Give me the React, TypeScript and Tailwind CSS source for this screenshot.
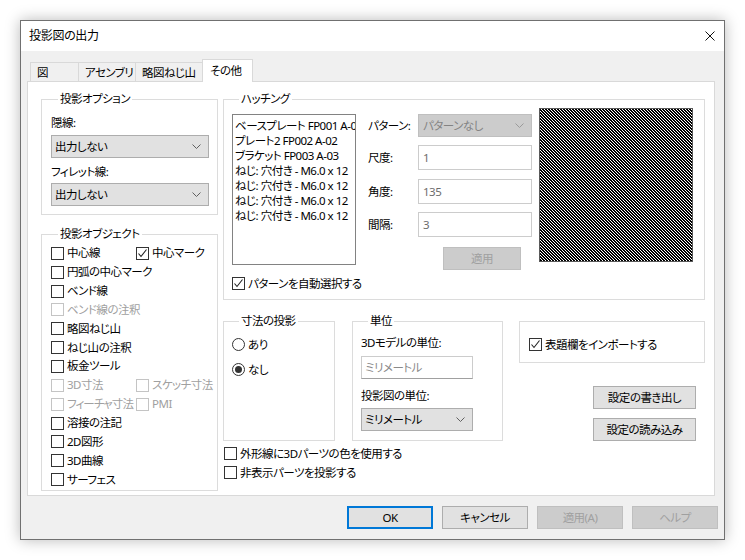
import React from "react";

type CheckProps = {
  label: string;
  checked?: boolean;
  disabled?: boolean;
  className?: string;
};

function Chevron({ color = "#606060" }: { color?: string }) {
  return (
    <svg width="9" height="5" viewBox="0 0 9 5" className="shrink-0">
      <polyline
        points="0.5,0.5 4.5,4.5 8.5,0.5"
        fill="none"
        stroke={color}
        strokeWidth="1"
      />
    </svg>
  );
}

function CheckBox({ label, checked, disabled, className = "" }: CheckProps) {
  return (
    <div
      className={`flex h-[18.85px] items-center gap-[3px] whitespace-nowrap ${
        disabled ? "text-[#a0a0a0]" : "text-black"
      } ${className}`}
    >
      <span
        className={`flex h-[13px] w-[13px] shrink-0 items-center justify-center border bg-white ${
          disabled ? "border-[#c4c4c4]" : "border-[#333333]"
        }`}
      >
        {checked && (
          <svg width="11" height="11" viewBox="0 0 11 11">
            <polyline
              points="1.5,5.5 4,8.5 9.5,1.5"
              fill="none"
              stroke="#222"
              strokeWidth="1.1"
            />
          </svg>
        )}
      </span>
      <span className="leading-[16px]">{label}</span>
    </div>
  );
}

function Radio({ label, checked }: { label: string; checked?: boolean }) {
  return (
    <div className="flex h-[19px] items-center gap-[3px]">
      <span className="flex h-[13px] w-[13px] items-center justify-center rounded-full border border-[#333333] bg-white">
        {checked && <span className="h-[7px] w-[7px] rounded-full bg-[#333333]" />}
      </span>
      <span className="leading-[16px]">{label}</span>
    </div>
  );
}

function Combo({ value, className = "" }: { value: string; className?: string }) {
  return (
    <div
      className={`flex h-[23px] items-center justify-between border border-[#adadad] bg-[#e1e1e1] pl-[3px] pr-[7px] ${className}`}
    >
      <span className="leading-[16px]">{value}</span>
      <Chevron />
    </div>
  );
}

function Legend({ children }: { children: React.ReactNode }) {
  return <legend className="ml-[7px] px-[2px] leading-[16px]">{children}</legend>;
}

function Button({
  label,
  disabled,
  primary,
  className = "",
}: {
  label: string;
  disabled?: boolean;
  primary?: boolean;
  className?: string;
}) {
  return (
    <div
      className={`flex h-[23px] items-center justify-center whitespace-nowrap ${
        primary
          ? "border-2 border-[#0078d7] bg-[#e1e1e1]"
          : disabled
          ? "border border-[#bfbfbf] bg-[#cccccc] text-[#a0a0a0]"
          : "border border-[#adadad] bg-[#e1e1e1]"
      } ${className}`}
    >
      {label}
    </div>
  );
}

function Hatch() {
  const lines = [];
  for (let k = -152; k <= 152; k += 3) {
    lines.push(
      <line key={k} x1={k} y1={0} x2={k + 152} y2={152} stroke="#fff" strokeWidth="1" />
    );
  }
  return (
    <div className="ml-[7px] mt-[1px] h-[154px] w-[154px] shrink-0 border border-[#5a5a5a] bg-black">
      <svg width="152" height="152" viewBox="0 0 152 152" shapeRendering="crispEdges">
        <rect width="152" height="152" fill="#000" />
        {lines}
      </svg>
    </div>
  );
}

const parts = [
  "ベースプレート FP001 A-01",
  "プレート2 FP002 A-02",
  "ブラケット FP003 A-03",
  "ねじ: 穴付き - M6.0 x 12",
  "ねじ: 穴付き - M6.0 x 12",
  "ねじ: 穴付き - M6.0 x 12",
  "ねじ: 穴付き - M6.0 x 12",
];

export default function App() {
  return (
    <div className="h-[560px] w-[745px] overflow-hidden bg-white pl-[20px] pt-[20px] font-['Noto_Sans','Noto_Sans_CJK_JP',sans-serif] text-[11.5px] tracking-[-0.5px] text-black [font-feature-settings:'palt']">
      <div className="flex h-[520px] w-[705px] flex-col border border-[#707070] bg-[#f0f0f0] shadow-[0_0_14px_rgba(0,0,0,0.28)]">
        {/* title bar */}
        <div className="flex h-[30px] shrink-0 items-center justify-between bg-white pl-[8px] pr-[9px]">
          <span className="text-[12px] leading-[16px] tracking-[-0.3px]">投影図の出力</span>
          <svg width="10" height="10" viewBox="0 0 10 10">
            <path d="M0.5 0.5 L9.5 9.5 M9.5 0.5 L0.5 9.5" stroke="#111" strokeWidth="1" />
          </svg>
        </div>

        {/* tabs */}
        <div className="ml-[9px] mt-[8px] -mb-[1px] flex h-[23px] items-end whitespace-nowrap">
          <div className="flex h-[20px] w-[48px] items-center border-l border-t border-[#d9d9d9] pl-[6px]">図</div>
          <div className="flex h-[20px] w-[57px] items-center border-l border-t border-[#d9d9d9] pl-[6px]">アセンブリ</div>
          <div className="flex h-[20px] w-[67px] items-center border-l border-t border-[#d9d9d9] pl-[6px]">略図ねじ山</div>
          <div className="relative z-10 flex h-[23px] w-[51px] items-center border-x border-t border-[#d9d9d9] bg-white pb-[1px] pl-[7px]">その他</div>
        </div>

        {/* tab panel */}
        <div className="ml-[6px] flex h-[415px] w-[688px] shrink-0 gap-[5px] border border-[#d9d9d9] bg-white pl-[13px] pt-[9px]">
          {/* left column */}
          <div className="flex w-[177px] shrink-0 flex-col">
            <fieldset className="min-w-0 border border-[#dcdcdc] pb-[8px] pl-[9px] pr-[8px]">
              <Legend>投影オプション</Legend>
              <div className="mt-[8px] leading-[16px]">隠線:</div>
              <Combo value="出力しない" className="mt-[4px]" />
              <div className="mt-[6px] leading-[16px]">フィレット線:</div>
              <Combo value="出力しない" className="mt-[3px]" />
            </fieldset>

            <fieldset className="mt-[11px] min-w-0 border border-[#dcdcdc] pb-[1px] pl-[9px]">
              <Legend>投影オブジェクト</Legend>
              <div className="mt-[2px] flex">
                <CheckBox label="中心線" className="w-[85px]" />
                <CheckBox label="中心マーク" checked />
              </div>
              <CheckBox label="円弧の中心マーク" />
              <CheckBox label="ベンド線" />
              <CheckBox label="ベンド線の注釈" disabled />
              <CheckBox label="略図ねじ山" />
              <CheckBox label="ねじ山の注釈" />
              <CheckBox label="板金ツール" />
              <div className="flex">
                <CheckBox label="3D寸法" disabled className="w-[85px]" />
                <CheckBox label="スケッチ寸法" disabled />
              </div>
              <div className="flex">
                <CheckBox label="フィーチャ寸法" disabled className="w-[85px] tracking-[-0.9px]" />
                <CheckBox label="PMI" disabled />
              </div>
              <CheckBox label="溶接の注記" />
              <CheckBox label="2D図形" />
              <CheckBox label="3D曲線" />
              <CheckBox label="サーフェス" />
            </fieldset>
          </div>

          {/* right column */}
          <div className="flex w-[482px] shrink-0 flex-col">
            <fieldset className="min-w-0 border border-[#dcdcdc] pb-[6px] pl-[8px]">
              <Legend>ハッチング</Legend>
              <div className="flex items-start">
                <div className="flex w-[124px] shrink-0 flex-col">
                  <div className="mt-[7px] h-[151px] w-[124px] overflow-hidden border border-[#828282] bg-white pl-[2px] pt-[3px]">
                    {parts.map((p, i) => (
                      <div key={i} className="whitespace-nowrap leading-[15px]">
                        {p}
                      </div>
                    ))}
                  </div>
                  <CheckBox label="パターンを自動選択する" checked className="mt-[9px] !h-[19px]" />
                </div>

                <div className="ml-[12px] mt-[7px] flex shrink-0 flex-col">
                  <div className="flex h-[23px] items-center">
                    <span className="w-[50px] leading-[16px]">パターン:</span>
                    <div className="flex h-[23px] w-[114px] items-center justify-between border border-[#bfbfbf] bg-[#cccccc] pl-[4px] pr-[7px] text-[#838383]">
                      <span className="leading-[16px]">パターンなし</span>
                      <Chevron color="#9a9a9a" />
                    </div>
                  </div>
                  {[
                    ["尺度:", "1", "mt-[8px]"],
                    ["角度:", "135", "mt-[9px]"],
                    ["間隔:", "3", "mt-[8px]"],
                  ].map(([l, v, m]) => (
                    <div key={l} className={`flex h-[25px] items-center ${m}`}>
                      <span className="w-[50px] leading-[16px]">{l}</span>
                      <div className="flex h-[25px] w-[114px] items-center border border-[#cccccc] bg-white pl-[4px] text-[#6d6d6d]">
                        {v}
                      </div>
                    </div>
                  ))}
                  <Button label="適用" disabled className="ml-[75px] mt-[10px] w-[78px]" />
                </div>

                <Hatch />
              </div>
            </fieldset>

            {/* lower section */}
            <div className="mt-[13px] flex items-start">
              <fieldset className="h-[128px] w-[112px] min-w-0 shrink-0 border border-[#dcdcdc] pl-[8px]">
                <Legend>寸法の投影</Legend>
                <div className="mt-[6px]">
                  <Radio label="あり" />
                </div>
                <div className="mt-[6px]">
                  <Radio label="なし" checked />
                </div>
              </fieldset>

              <fieldset className="ml-[17px] h-[128px] w-[151px] min-w-0 shrink-0 border border-[#dcdcdc] pl-[8px]">
                <Legend>単位</Legend>
                <div className="mt-[6px] leading-[16px]">3Dモデルの単位:</div>
                <div className="mt-[5px] flex h-[23px] w-[112px] items-center border border-[#cccccc] border-b-[#a0a0a0] bg-white pl-[3px] text-[#8a8a8a]">
                  ミリメートル
                </div>
                <div className="mt-[9px] leading-[16px]">投影図の単位:</div>
                <Combo value="ミリメートル" className="mt-[4px] w-[112px]" />
              </fieldset>

              <div className="ml-[16px] mt-[8px] flex w-[186px] shrink-0 flex-col items-end">
                <div className="h-[42px] w-[186px] border border-[#dcdcdc] pl-[9px] pt-[13px]">
                  <CheckBox label="表題欄をインポートする" checked className="!h-[19px]" />
                </div>
                <Button label="設定の書き出し" className="mr-[9px] mt-[23px] w-[103px]" />
                <Button label="設定の読み込み" className="mr-[9px] mt-[9px] w-[103px]" />
              </div>
            </div>

            <div className="ml-[1px] mt-[3px]">
              <CheckBox label="外形線に3Dパーツの色を使用する" className="!h-[19px]" />
              <CheckBox label="非表示パーツを投影する" className="!h-[19px]" />
            </div>
          </div>
        </div>

        {/* dialog buttons */}
        <div className="mt-[10px] flex justify-end gap-[9px] pr-[6px]">
          <Button label="OK" primary className="w-[86px]" />
          <Button label="キャンセル" className="w-[86px]" />
          <Button label="適用(A)" disabled className="w-[86px]" />
          <Button label="ヘルプ" disabled className="w-[86px]" />
        </div>
      </div>
    </div>
  );
}
